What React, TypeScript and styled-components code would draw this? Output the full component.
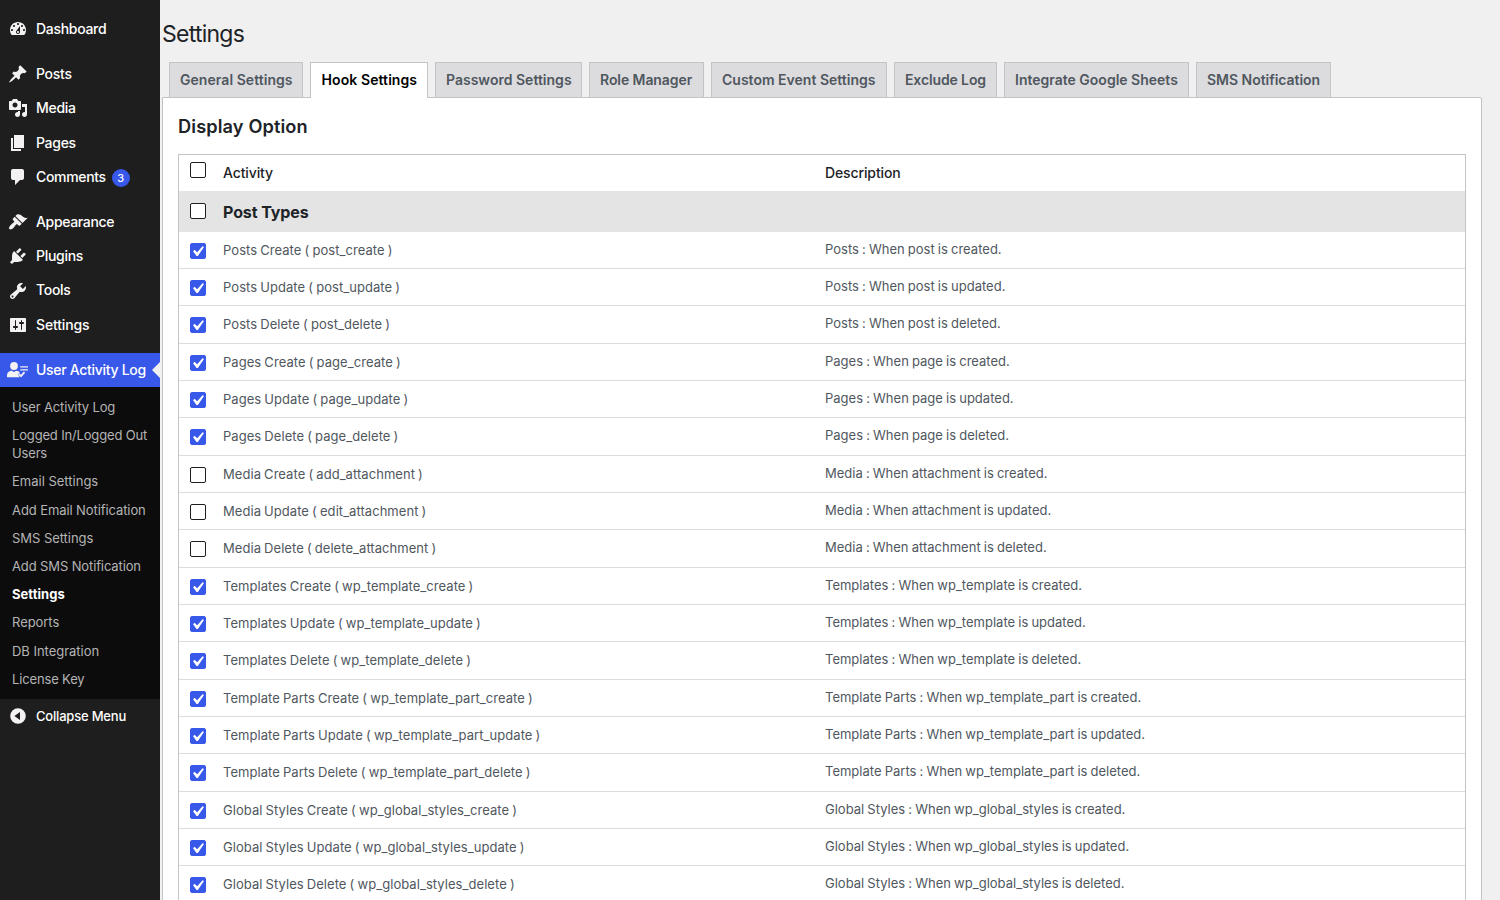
import React from "react";
import styled, { createGlobalStyle } from "styled-components";

const GlobalStyle = createGlobalStyle`
  * { box-sizing: border-box; }
  html, body { margin: 0; padding: 0; }
  body {
    height: 900px;
    overflow: hidden;
    background: #f0f0f0;
    color: #1d2327;
    font-family: Inter, "Liberation Sans", sans-serif;
    font-size: 13px;
  }
`;

const Shell = styled.div`
  display: flex;
  height: 900px;
  overflow: hidden;
`;

const Sidebar = styled.nav`
  flex: 0 0 160px;
  height: 900px;
  padding-top: 12px;
  background: #1e1e1e;
  color: #fff;
`;

const MenuGroup = styled.div<{ $gap: number }>`
  margin-bottom: ${(p) => p.$gap}px;
`;

const MenuItem = styled.a<{ $active?: boolean; $small?: boolean }>`
  position: relative;
  display: flex;
  align-items: center;
  height: 34.33px;
  padding-left: 8px;
  font-size: ${(p) => (p.$small ? 13 : 14)}px;
  font-weight: 500;
  white-space: nowrap;
  color: #fff;
  background: ${(p) => (p.$active ? "#3858e9" : "transparent")};
`;

const MenuIcon = styled.svg`
  flex: none;
  display: block;
  width: 20px;
  height: 20px;
  margin-right: 8px;
  fill: #f3f1f1;
`;

const MenuLabel = styled.span<{ $ls: number }>`
  padding-bottom: 1.4px;
  letter-spacing: ${(p) => p.$ls}px;
`;

const Badge = styled.span`
  display: flex;
  align-items: center;
  justify-content: center;
  width: 18px;
  height: 18px;
  margin: 1px 0 0 6px;
  border-radius: 9px;
  background: #3858e9;
  font-size: 11px;
`;

const Pointer = styled.span`
  position: absolute;
  right: 0;
  top: 9px;
  border: 8px solid transparent;
  border-left-width: 0;
  border-right-color: #f0f0f0;
`;

const SubMenu = styled.div`
  padding: 5.65px 0 6.3px;
  background: #0c0c0c;
`;

const SubItem = styled.a<{ $current?: boolean; $ls: number }>`
  display: block;
  padding: 5.1px 8px 5.1px 12px;
  line-height: 18px;
  font-size: 13px;
  white-space: pre-line;
  letter-spacing: ${(p) => p.$ls}px;
  font-weight: ${(p) => (p.$current ? 700 : 400)};
  color: ${(p) => (p.$current ? "#fff" : "#b4b4b5")};
`;

const Main = styled.main`
  flex: 1;
  min-width: 0;
  padding: 19px 18px 0 2px;
`;

const PageTitle = styled.h1`
  margin: 0;
  height: 43px;
  line-height: 30px;
  font-size: 23px;
  font-weight: 400;
  letter-spacing: -0.75px;
`;

const TabBar = styled.div`
  display: flex;
  gap: 7px;
  height: 35px;
  padding-left: 7px;
`;

const Tab = styled.a<{ $w: number; $ls: number; $active?: boolean }>`
  position: relative;
  flex: none;
  width: ${(p) => p.$w}px;
  height: ${(p) => (p.$active ? 36 : 35)}px;
  padding-left: ${(p) => (p.$active ? 10.6 : 10)}px;
  border: 1px solid #c3c4c7;
  border-bottom: 0;
  background: ${(p) => (p.$active ? "#fff" : "#dcdcde")};
  color: ${(p) => (p.$active ? "#000" : "#50575e")};
  line-height: 34px;
  font-size: 14px;
  font-weight: 600;
  white-space: nowrap;
  letter-spacing: ${(p) => p.$ls}px;
`;

const Panel = styled.section`
  width: 1320px;
  height: 850px;
  padding: 16px 15px 0;
  border: 1px solid #c3c4c7;
  border-radius: 0 2px 0 0;
  background: #fff;
`;

const PanelTitle = styled.h2`
  margin: 0;
  height: 40px;
  line-height: 24px;
  font-size: 18.2px;
  font-weight: 600;
  letter-spacing: 0.12px;
`;

const Table = styled.div`
  border: 1px solid #c3c4c7;
  height: 800px;
`;

const Row = styled.div<{ $h: number }>`
  display: grid;
  grid-template-columns: 44px 602px 1fr;
  height: ${(p) => p.$h}px;
  border-bottom: 1px solid #dcdcdc;
  color: #50575e;
  white-space: nowrap;
`;

const HeadRow = styled(Row)`
  border-bottom-color: #e4e4e4;
  color: #1d2327;
  font-size: 14px;
  font-weight: 500;
  line-height: 36px;
  letter-spacing: -0.12px;
`;

const CategoryRow = styled(Row)`
  border-bottom-color: #e4e4e4;
  background: #e4e4e4;
  color: #1d2327;
  font-size: 16px;
  font-weight: 700;
  line-height: 41px;
  letter-spacing: -0.1px;
`;

const Cell = styled.span``;

const ActivityCell = styled(Cell)`
  line-height: 37px;
  letter-spacing: 0.05px;
  word-spacing: -0.6px;
`;

const DescriptionCell = styled(Cell)`
  line-height: 35px;
  letter-spacing: 0.01px;
  word-spacing: -0.55px;
`;

const Box = styled.span<{ $top: number; $checked?: boolean }>`
  display: block;
  width: 16px;
  height: 16px;
  margin: ${(p) => p.$top}px 0 0 11px;
  border: 1px solid ${(p) => (p.$checked ? "#3858e9" : "#1e1e1e")};
  border-radius: 2px;
  background: ${(p) => (p.$checked ? "#3858e9" : "#fff")};
`;

const Tick = styled.svg`
  display: block;
  width: 21px;
  height: 21px;
  margin: -3px 0 0 -4px;
  fill: #fff;
`;

const Checkbox = ({ top, checked }: { top: number; checked?: boolean }) => (
  <Box $top={top} $checked={checked}>
    {checked && (
      <Tick viewBox="0 0 20 20">
        <path d="M14.83 4.89l1.34.94-5.81 8.38H9.02L5.78 9.67l1.34-1.25 2.57 2.4z" />
      </Tick>
    )}
  </Box>
);

const icons = {
  dashboard:
    "M3.76 16h12.48c1.1-1.37 1.76-3.11 1.76-5 0-4.42-3.58-8-8-8s-8 3.58-8 8c0 1.89.66 3.63 1.76 5zM10 4c.55 0 1 .45 1 1s-.45 1-1 1-1-.45-1-1 .45-1 1-1zM6 6c.55 0 1 .45 1 1s-.45 1-1 1-1-.45-1-1 .45-1 1-1zm8 0c.55 0 1 .45 1 1s-.45 1-1 1-1-.45-1-1 .45-1 1-1zm-5.37 5.55L12 7v6c0 1.1-.9 2-2 2s-2-.9-2-2c0-.57.24-1.08.63-1.45zM4 10c.55 0 1 .45 1 1s-.45 1-1 1-1-.45-1-1 .45-1 1-1zm12 0c.55 0 1 .45 1 1s-.45 1-1 1-1-.45-1-1 .45-1 1-1zm-5 3c0-.55-.45-1-1-1s-1 .45-1 1 .45 1 1 1 1-.45 1-1z",
  posts:
    "M10.44 3.02l1.82-1.82 6.36 6.35-1.83 1.82c-1.05-.68-2.48-.57-3.41.36l-.75.75c-.92.93-1.04 2.35-.35 3.41l-1.83 1.82-2.41-2.41-2.8 2.79c-.42.42-3.38 2.71-3.8 2.29s1.86-3.39 2.28-3.81l2.79-2.79L4.1 9.36l1.83-1.82c1.05.69 2.48.57 3.4-.36l.75-.75c.93-.92 1.05-2.35.36-3.41z",
  media:
    "M13 11V4c0-.55-.45-1-1-1h-1.67L9 1H5L3.67 3H2c-.55 0-1 .45-1 1v7c0 .55.45 1 1 1h10c.55 0 1-.45 1-1zM7 4.5c1.38 0 2.5 1.12 2.5 2.5S8.38 9.5 7 9.5 4.5 8.38 4.5 7 5.62 4.5 7 4.5zM14 6h5v10.5c0 1.38-1.12 2.5-2.5 2.5S14 17.88 14 16.5s1.12-2.5 2.5-2.5c.17 0 .34.02.5.05V9h-3V6zm-4 8.05V13h2v3.5c0 1.38-1.12 2.5-2.5 2.5S7 17.88 7 16.5 8.12 14 9.5 14c.17 0 .34.02.5.05z",
  pages: "M6 15V2h10v13H6zm-1 1h8v2H3V5h2v11z",
  comments:
    "M5 2h9c1.1 0 2 .9 2 2v7c0 1.1-.9 2-2 2h-2l-5 5v-5H5c-1.1 0-2-.9-2-2V4c0-1.1.9-2 2-2z",
  appearance:
    "M14.48 11.06L7.41 3.99l1.5-1.5c.5-.56 2.3-.47 3.51.32 1.21.8 1.43 1.28 2.91 2.1 1.18.64 2.45 1.26 4.45.85zm-.71.71L6.7 4.7 4.93 6.47c-.39.39-.39 1.02 0 1.41l1.06 1.06c.39.39.39 1.03 0 1.42-.6.6-1.43 1.11-2.21 1.69-.35.26-.7.53-1.01.84C1.43 14.23.4 16.08 1.4 17.07c.99 1 2.84-.03 4.18-1.36.31-.31.58-.66.85-1.02.57-.78 1.08-1.61 1.69-2.21.39-.39 1.02-.39 1.41 0l1.06 1.06c.39.39 1.02.39 1.41 0z",
  plugins:
    "M13.11 4.36L9.87 7.6 8 5.73l3.24-3.24c.35-.34 1.05-.2 1.56.32.52.51.66 1.21.31 1.55zm-8 1.77l.91-1.12 9.01 9.01-1.19.84c-.71.71-2.63 1.16-3.82 1.16H6.14L4.9 17.26c-.59.59-1.54.59-2.12 0-.59-.58-.59-1.53 0-2.12l1.24-1.24v-3.88c0-1.13.4-3.19 1.09-3.89zm7.26 3.97l3.24-3.24c.34-.35 1.04-.21 1.55.31.52.51.66 1.21.31 1.55l-3.24 3.25z",
  tools:
    "M16.68 9.77c-1.34 1.34-3.3 1.67-4.95.99l-5.41 6.52c-.99.99-2.59.99-3.58 0s-.99-2.59 0-3.57l6.52-5.42c-.68-1.65-.35-3.61.99-4.95 1.28-1.28 3.12-1.62 4.72-1.06l-2.89 2.89 2.82 2.82 2.86-2.87c.53 1.58.18 3.39-1.08 4.65zM3.81 16.21c.4.39 1.04.39 1.43 0 .4-.4.4-1.04 0-1.43-.39-.4-1.03-.4-1.43 0-.39.39-.39 1.03 0 1.43z",
  settings:
    "M18 16V4c0-.55-.45-1-1-1H3c-.55 0-1 .45-1 1v12c0 .55.45 1 1 1h14c.55 0 1-.45 1-1zM8 11h1c.55 0 1 .45 1 1s-.45 1-1 1H8v1.5c0 .28-.22.5-.5.5s-.5-.22-.5-.5V13H6c-.55 0-1-.45-1-1s.45-1 1-1h1V5.5c0-.28.22-.5.5-.5s.5.22.5.5V11zm5-2h-1c-.55 0-1-.45-1-1s.45-1 1-1h1V5.5c0-.28.22-.5.5-.5s.5.22.5.5V7h1c.55 0 1 .45 1 1s-.45 1-1 1h-1v5.5c0 .28-.22.5-.5.5s-.5-.22-.5-.5V9z",
  collapse:
    "M10 2.2a7.8 7.8 0 1 0 0 15.6 7.8 7.8 0 0 0 0-15.6zM12 6v8L6.4 10z",
};

type Entry = { icon: keyof typeof icons; label: string; ls: number; badge?: string };

const groups: { gap: number; items: Entry[] }[] = [
  { gap: 10.67, items: [{ icon: "dashboard", label: "Dashboard", ls: -0.3 }] },
  {
    gap: 10.4,
    items: [
      { icon: "posts", label: "Posts", ls: -0.28 },
      { icon: "media", label: "Media", ls: -0.28 },
      { icon: "pages", label: "Pages", ls: -0.3 },
      { icon: "comments", label: "Comments", ls: -0.33, badge: "3" },
    ],
  },
  {
    gap: 10.94,
    items: [
      { icon: "appearance", label: "Appearance", ls: -0.35 },
      { icon: "plugins", label: "Plugins", ls: -0.3 },
      { icon: "tools", label: "Tools", ls: -0.3 },
      { icon: "settings", label: "Settings", ls: -0.15 },
    ],
  },
];

const subItems: [string, number][] = [
  ["User Activity Log", -0.14],
  ["Logged In/Logged Out\nUsers", -0.16],
  ["Email Settings", 0],
  ["Add Email Notification", -0.09],
  ["SMS Settings", -0.05],
  ["Add SMS Notification", -0.12],
  ["Settings", 0.05],
  ["Reports", -0.05],
  ["DB Integration", -0.03],
  ["License Key", -0.15],
];

const tabs: [string, number, number][] = [
  ["General Settings", 134, 0.05],
  ["Hook Settings", 118, 0.08],
  ["Password Settings", 147, 0.01],
  ["Role Manager", 115, -0.08],
  ["Custom Event Settings", 176, 0.01],
  ["Exclude Log", 103, -0.12],
  ["Integrate Google Sheets", 185, 0],
  ["SMS Notification", 135, -0.03],
];

type Kind = { name: string; object: string; hooks: string[]; checked: boolean };

const kinds: Kind[] = [
  { name: "Posts", object: "post", hooks: ["post_create", "post_update", "post_delete"], checked: true },
  { name: "Pages", object: "page", hooks: ["page_create", "page_update", "page_delete"], checked: true },
  { name: "Media", object: "attachment", hooks: ["add_attachment", "edit_attachment", "delete_attachment"], checked: false },
  { name: "Templates", object: "wp_template", hooks: ["wp_template_create", "wp_template_update", "wp_template_delete"], checked: true },
  { name: "Template Parts", object: "wp_template_part", hooks: ["wp_template_part_create", "wp_template_part_update", "wp_template_part_delete"], checked: true },
  { name: "Global Styles", object: "wp_global_styles", hooks: ["wp_global_styles_create", "wp_global_styles_update", "wp_global_styles_delete"], checked: true },
];

const actions = ["Create", "Update", "Delete"];

const Glyph = ({ d }: { d: string }) => (
  <MenuIcon viewBox="0 0 20 20">
    <path fillRule="evenodd" d={d} />
  </MenuIcon>
);

const UserGlyph = () => (
  <MenuIcon viewBox="0 0 20 20" overflow="visible">
    <circle cx="6" cy="6" r="3.9" />
    <path d="M-1 17.3v-1.8c0-3.2 2.5-4.8 4.8-4.8L6 12l2.2-1.3c1.6 0 2.9.7 3.7 1.9l-2 1.7 1.8 3z" />
    <path d="M12.3 6.2H20v1.4h-7.7zM12.3 9.2H20v1.4h-7.7zM10.2 14.5l1.2-1.2 1.5 1.5 3-3.3 1.3 1.2-4.2 4.7z" />
  </MenuIcon>
);

export default function App() {
  return (
    <>
      <GlobalStyle />
      <Shell>
        <Sidebar>
          {groups.map((g, i) => (
            <MenuGroup key={i} $gap={g.gap}>
              {g.items.map((e) => (
                <MenuItem key={e.label}>
                  <Glyph d={icons[e.icon]} />
                  <MenuLabel $ls={e.ls}>{e.label}</MenuLabel>
                  {e.badge && <Badge>{e.badge}</Badge>}
                </MenuItem>
              ))}
            </MenuGroup>
          ))}
          <MenuItem $active>
            <UserGlyph />
            <MenuLabel $ls={-0.3}>User Activity Log</MenuLabel>
            <Pointer />
          </MenuItem>
          <SubMenu>
            {subItems.map(([t, ls]) => (
              <SubItem key={t} $ls={ls} $current={t === "Settings"}>
                {t}
              </SubItem>
            ))}
          </SubMenu>
          <MenuItem $small>
            <Glyph d={icons.collapse} />
            <MenuLabel $ls={-0.2}>Collapse Menu</MenuLabel>
          </MenuItem>
        </Sidebar>
        <Main>
          <PageTitle>Settings</PageTitle>
          <TabBar>
            {tabs.map(([t, w, ls], i) => (
              <Tab key={t} $w={w} $ls={ls} $active={i === 1}>
                {t}
              </Tab>
            ))}
          </TabBar>
          <Panel>
            <PanelTitle>Display Option</PanelTitle>
            <Table>
              <HeadRow $h={37}>
                <Checkbox top={7} />
                <Cell>Activity</Cell>
                <Cell>Description</Cell>
              </HeadRow>
              <CategoryRow $h={40}>
                <Checkbox top={11} />
                <Cell>Post Types</Cell>
              </CategoryRow>
              {kinds.map((k) =>
                actions.map((a, i) => (
                  <Row key={k.name + a} $h={i === 2 ? 38 : 37}>
                    <Checkbox top={11} checked={k.checked} />
                    <ActivityCell>
                      {`${k.name} ${a} ( ${k.hooks[i]} )`}
                    </ActivityCell>
                    <DescriptionCell>
                      {`${k.name} : When ${k.object} is ${a.toLowerCase()}d.`}
                    </DescriptionCell>
                  </Row>
                ))
              )}
            </Table>
          </Panel>
        </Main>
      </Shell>
    </>
  );
}
